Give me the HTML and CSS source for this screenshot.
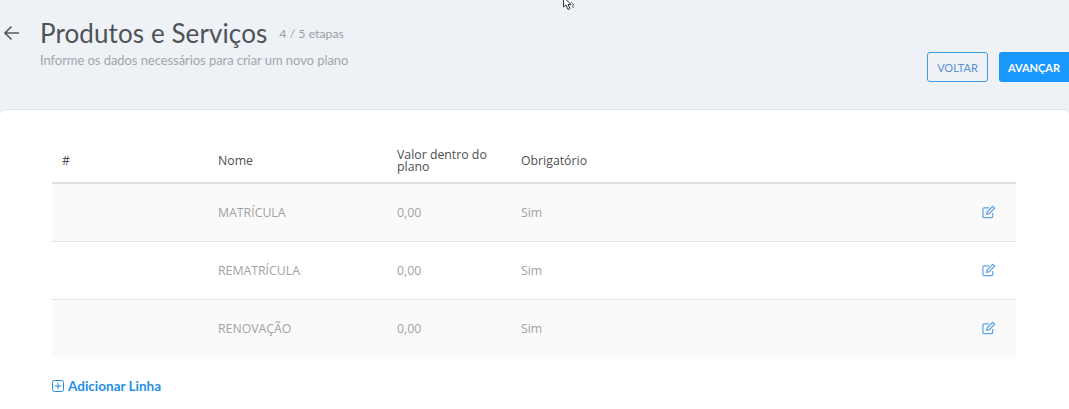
FILE: index.html
```html
<!DOCTYPE html>
<html lang="pt-BR">
<head>
  <meta charset="UTF-8" />
  <title>Produtos e Serviços</title>
  <link rel="stylesheet" href="styles.css">
</head>
<body>
  <svg class="cursor" width="16" height="12" viewBox="0 0 16 12">
    <path d="M3.5 -3 L3.5 7 L6 5 L8 9.5 L10 8.5 L8 4.5 L11 4.5 Z" fill="#fff" stroke="#333" stroke-width="1"/>
    <path d="M11 2 L14 5 L12.5 5.5 L13.5 8" fill="none" stroke="#777" stroke-width="1"/>
  </svg>

  <header class="page-header">
    <svg class="back" width="16" height="16" viewBox="0 0 16 16">
      <path d="M15 8 H1 M7.5 1.5 L1 8 L7.5 14.5" fill="none" stroke="#555b61" stroke-width="1.6"/>
    </svg>
    <div class="titles">
      <div class="title-row">
        <h1>Produtos e Serviços</h1>
        <span class="steps">4 / 5 etapas</span>
      </div>
      <p>Informe os dados necessários para criar um novo plano</p>
    </div>
    <div class="actions">
      <button class="btn btn-outline">VOLTAR</button>
      <button class="btn btn-primary">AVANÇAR</button>
    </div>
  </header>

  <main class="card">
    <table>
      <thead>
        <tr>
          <th class="col-num">#</th>
          <th class="col-name">Nome</th>
          <th class="col-value">Valor dentro do plano</th>
          <th class="col-req">Obrigatório</th>
          <th></th>
        </tr>
      </thead>
      <tbody>
        <tr>
          <td></td><td>MATRÍCULA</td><td>0,00</td><td>Sim</td>
          <td class="cell-edit"><svg class="edit" width="14" height="14" viewBox="0 0 15 14"><path d="M11.5 8 V11.5 Q11.5 13 10 13 H2.5 Q1 13 1 11.5 V4 Q1 2.5 2.5 2.5 H7.5" fill="none" stroke="#5ea3e6" stroke-width="1.3"/><path d="M5.5 7 L11.5 1 L13.5 3 L7.5 9 L5 9.5 Z" fill="none" stroke="#5ea3e6" stroke-width="1.3"/></svg></td>
        </tr>
        <tr>
          <td></td><td>REMATRÍCULA</td><td>0,00</td><td>Sim</td>
          <td class="cell-edit"><svg class="edit" width="14" height="14" viewBox="0 0 15 14"><path d="M11.5 8 V11.5 Q11.5 13 10 13 H2.5 Q1 13 1 11.5 V4 Q1 2.5 2.5 2.5 H7.5" fill="none" stroke="#5ea3e6" stroke-width="1.3"/><path d="M5.5 7 L11.5 1 L13.5 3 L7.5 9 L5 9.5 Z" fill="none" stroke="#5ea3e6" stroke-width="1.3"/></svg></td>
        </tr>
        <tr>
          <td></td><td>RENOVAÇÃO</td><td>0,00</td><td>Sim</td>
          <td class="cell-edit"><svg class="edit" width="14" height="14" viewBox="0 0 15 14"><path d="M11.5 8 V11.5 Q11.5 13 10 13 H2.5 Q1 13 1 11.5 V4 Q1 2.5 2.5 2.5 H7.5" fill="none" stroke="#5ea3e6" stroke-width="1.3"/><path d="M5.5 7 L11.5 1 L13.5 3 L7.5 9 L5 9.5 Z" fill="none" stroke="#5ea3e6" stroke-width="1.3"/></svg></td>
        </tr>
      </tbody>
    </table>
    <a class="add-line" href="#">
      <svg width="12" height="12" viewBox="0 0 12 12"><rect x="0.5" y="0.5" width="11" height="11" rx="2" fill="none" stroke="#1f8fe8"/><path d="M3 6 H9 M6 3 V9" stroke="#1f8fe8"/></svg>
      Adicionar Linha
    </a>
  </main>
</body>
</html>
```

FILE: styles.css
```css
html, body {
  height: 100%;
}

body {
  margin: 0;
  height: 409px;
  overflow: hidden;
  position: relative;
  background-color: #eef1f6;
  font-family: 'Open Sans', sans-serif;
  color: #555;
}

.cursor {
  position: absolute;
  left: 560px;
  top: 0;
}

.page-header {
  height: 109px;
  box-sizing: border-box;
  padding: 19px 0 0 4px;
  display: flex;
  align-items: flex-start;
}

.back {
  margin-top: 6px;
}

.titles {
  margin-left: 20px;
  flex: 1;
}

.title-row {
  display: flex;
  align-items: center;
}

h1 {
  margin: 0;
  font-family: 'Lato', sans-serif;
  font-size: 26px;
  line-height: 28px;
  font-weight: 400;
  letter-spacing: 0.1px;
  color: #4f5359;
}

.steps {
  margin-left: 12px;
  font-family: 'Lato', sans-serif;
  font-size: 12.3px;
  color: #9a9da3;
}

.titles p {
  margin: 5px 0 0;
  font-family: 'Lato', sans-serif;
  font-size: 13px;
  line-height: 16px;
  letter-spacing: -0.06px;
  color: #a3a6ab;
}

.actions {
  display: flex;
  gap: 11px;
  margin-top: 33px;
}

.btn {
  height: 30px;
  box-sizing: border-box;
  border-radius: 3px;
  font-family: 'Lato', sans-serif;
  font-size: 11px;
  padding: 0;
}

.btn-outline {
  width: 61px;
  background: transparent;
  border: 1px solid #3f9bdc;
  color: #5b8fd6;
}

.btn-primary {
  width: 70px;
  background-color: #1a97fb;
  border: none;
  border-radius: 3px 0 0 3px;
  color: #fff;
  font-weight: 700;
}

.card {
  height: 300px;
  box-sizing: border-box;
  padding: 29px 53px 0 52px;
  background: #fff;
  border-top: 1px solid #e2e4e8;
  border-radius: 6px 6px 0 0;
}

table {
  width: 964px;
  border-collapse: collapse;
  table-layout: fixed;
  font-size: 12.3px;
}

th {
  height: 44px;
  padding: 0 10px;
  box-sizing: border-box;
  text-align: left;
  font-weight: 400;
  font-size: 12.3px;
  line-height: 12px;
  color: #505050;
  border-bottom: 2px solid #dfdfdf;
}

.col-num { width: 156px; }
.col-name { width: 179px; }
.col-value { width: 124px; }
.col-req { width: 400px; }

td {
  height: 58px;
  box-sizing: border-box;
  padding: 0 10px;
  color: #a2a2a2;
  border-bottom: 1px solid #e3e3e3;
}

tbody tr:nth-child(odd) td {
  background-color: #fafafa;
}

tbody tr:last-child td {
  border-bottom: none;
}

.cell-edit {
  padding-right: 20px;
}

.edit {
  display: block;
  margin-left: auto;
}

.add-line {
  display: inline-flex;
  align-items: center;
  gap: 4px;
  margin-top: 21px;
  font-family: 'Lato', sans-serif;
  font-size: 13.5px;
  font-weight: 700;
  color: #1f8fe8;
  text-decoration: none;
}
```
